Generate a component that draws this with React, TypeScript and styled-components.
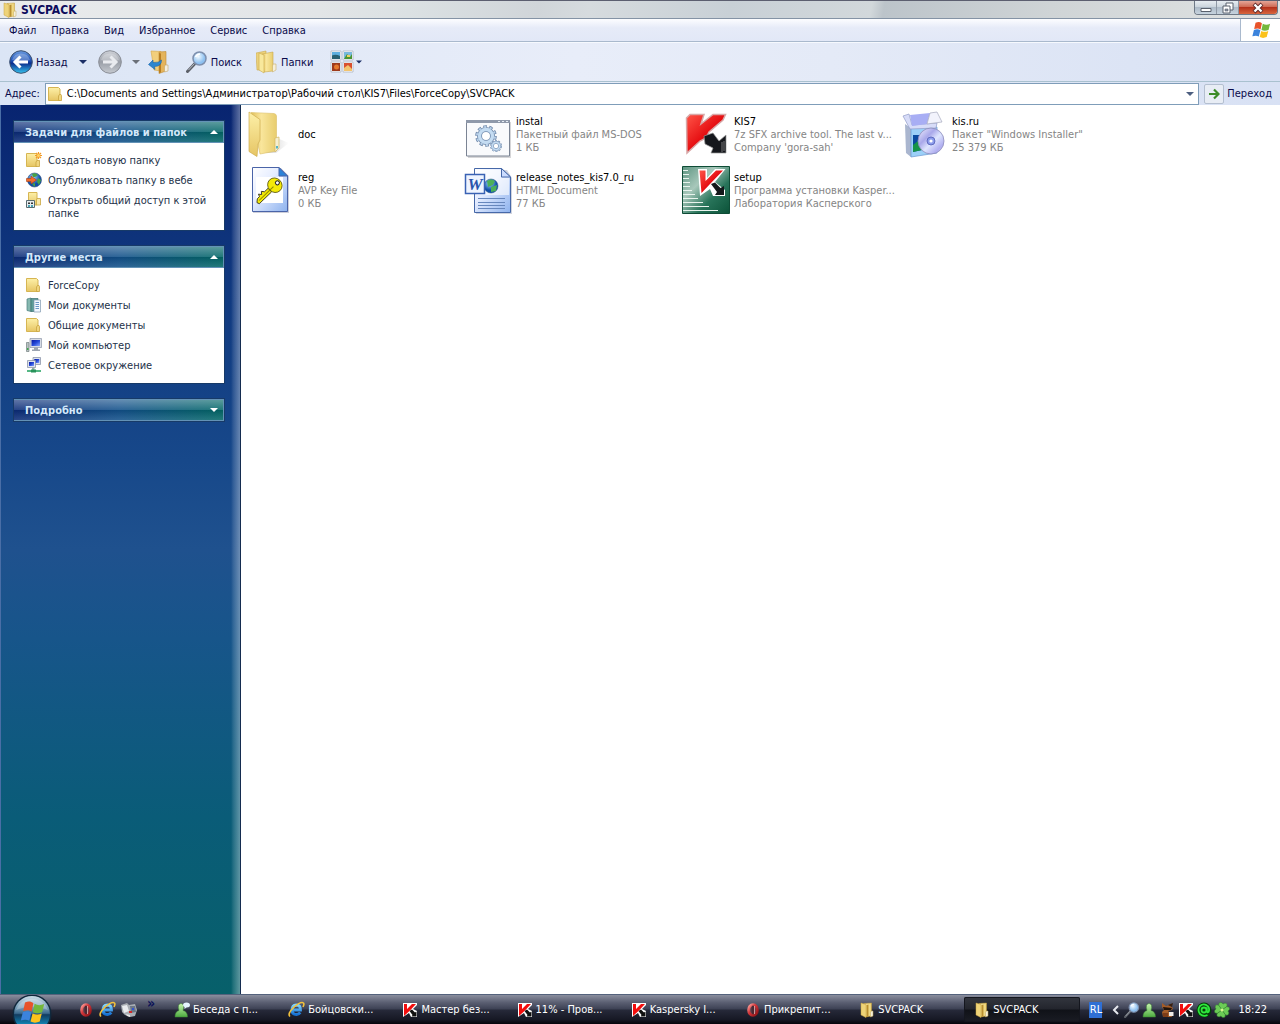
import React from "react";
import styled, { createGlobalStyle, css } from "styled-components";

const font = `Tahoma, "DejaVu Sans Condensed", "DejaVu Sans", sans-serif`;

const GlobalStyle = createGlobalStyle`
  * { box-sizing: border-box; }
  body { margin: 0; font: 11px/13px ${font}; color: #000; }
  button, input { font: inherit; color: inherit; }
  button { border: 0; background: none; padding: 0; cursor: default; white-space: nowrap; }
  ul { list-style: none; margin: 0; padding: 0; }
  h1, h2, p { margin: 0; }
  svg { display: block; flex: none; }
`;

/* ---------- shared gradients ---------- */

const stops = (...c: [number, string][]) =>
  c.map(([o, s]) => <stop key={o} offset={o} stopColor={s} />);

const DefsSvg = styled.svg`
  position: absolute;
`;

const Gradients = () => (
  <DefsSvg width="0" height="0" aria-hidden="true">
    <defs>
      <linearGradient id="yellow" x1="0" x2="1">{stops([0, "#e2c05a"], [0.4, "#f9e69c"], [1, "#e8cd6e"])}</linearGradient>
      <linearGradient id="yellowV" x2="0" y2="1">{stops([0, "#fdf0a8"], [1, "#e6c564"])}</linearGradient>
      <linearGradient id="back" x2="0" y2="1">{stops([0, "#6b9be0"], [0.45, "#1c4fb4"], [0.55, "#0b2d8c"], [1, "#35c4f0"])}</linearGradient>
      <linearGradient id="gray" x2="0" y2="1">{stops([0, "#cfd2d8"], [0.5, "#9a9fa8"], [1, "#c6cad0"])}</linearGradient>
      <linearGradient id="orb" x2="0" y2="1">{stops([0, "#c9dbe6"], [0.3, "#7fa3bc"], [0.48, "#3b6a8e"], [0.52, "#123c60"], [0.75, "#1179a8"], [1, "#37d0f0"])}</linearGradient>
      <linearGradient id="paper" x2="1" y2="1">{stops([0, "#ffffff"], [0.4, "#e4ecff"], [1, "#8db2ee"])}</linearGradient>
      <linearGradient id="red" x2="1" y2="1">{stops([0, "#ff5548"], [0.5, "#e60f12"], [1, "#b80006"])}</linearGradient>
      <linearGradient id="green" x2="1" y2="1">{stops([0, "#5c9480"], [0.35, "#a8c8bb"], [0.65, "#28745a"], [1, "#0b5238"])}</linearGradient>
      <linearGradient id="buddy" x2="0" y2="1">{stops([0, "#c8f5b0"], [1, "#4dab3f"])}</linearGradient>
      <linearGradient id="screen" x2="1" y2="1">{stops([0, "#0818a0"], [0.5, "#2448d8"], [1, "#88a8ff"])}</linearGradient>
      <linearGradient id="ie" x2="0" y2="1">{stops([0, "#7fd4ff"], [1, "#1672d4"])}</linearGradient>
      <linearGradient id="opera" x2="1" y2="1">{stops([0, "#ffa09a"], [0.4, "#d4383c"], [1, "#8c1216"])}</linearGradient>
      <linearGradient id="disc" x2="1" y2="1">{stops([0, "#f4f2ff"], [0.35, "#a9a8ea"], [0.55, "#dfe6ff"], [0.8, "#b0aef0"], [1, "#e8e4ff"])}</linearGradient>
      <radialGradient id="lens" cx="0.4" cy="0.35">{stops([0, "#f4fbff"], [1, "#8dc0f0"])}</radialGradient>
      <radialGradient id="globe" cx="0.4" cy="0.3">{stops([0, "#9cd8ff"], [1, "#0f4ea8"])}</radialGradient>
      <linearGradient id="shadow" x2="1">{stops([0, "#a8a8a8"], [1, "#ffffff"])}</linearGradient>
    </defs>
  </DefsSvg>
);

/* ---------- icons ---------- */

type IconProps = { size?: number };

const Icon = ({ size = 16, box = 16, children }: { size?: number; box?: number; children: React.ReactNode }) => (
  <svg width={size} height={size} viewBox={`0 0 ${box} ${box}`} aria-hidden="true">{children}</svg>
);

const FlagShapes = () => (
  <>
    <path d="M5 3C8 1.500 10 2 12 3.500L10.500 10.500C8.500 9 6.500 9 3.500 10Z" fill="#e8532a" />
    <path d="M13 4C15.500 5.500 18 5.500 21 4.200L19.300 11C16.500 12.200 14 12.200 11.500 11Z" fill="#74b83c" />
    <path d="M3.200 11C6 9.800 8.500 10 10.300 11.300L8.600 18.200C6.500 17 4.500 16.800 1.500 18Z" fill="#3b83dc" />
    <path d="M11.300 12C14 13.300 16.500 13.200 19 12L17.300 18.800C14.500 20 12 20 9.600 18.800Z" fill="#fbc21c" />
  </>
);

const Flag = ({ size = 20 }: IconProps) => (
  <Icon size={size} box={22}><FlagShapes /></Icon>
);

const OpenFolder = ({ size = 16 }: IconProps) => (
  <Icon size={size}>
    <path d="M5 1.500L12.500 1V14L6 15Z" fill="url(#yellow)" stroke="#c19a38" strokeWidth=".5" />
    <path d="M2 1L7 2.500V15.500L2 13Z" fill="#eed378" stroke="#c9a443" strokeWidth=".5" />
    <path d="M7.500 3L9.500 2.500V14.500L7.500 15Z" fill="#b98f2e" />
    <path d="M12.500 9H14V14L11.500 15V10Z" fill="#f4efdb" stroke="#c6ab5d" strokeWidth=".5" />
  </Icon>
);

const SmallFolder = () => (
  <Icon>
    <path d="M.5 1.500H10.500L12 3V14.500H.5Z" fill="url(#yellowV)" stroke="#d6b552" />
    <path d="M11.500 8.500H13L13.500 9.500V14.500H10.500V10Z" fill="#f0d57e" stroke="#c8a440" strokeWidth=".8" />
  </Icon>
);

const NewFolder = () => (
  <Icon>
    <path d="M.5 1.500H11V14.500H.5Z" fill="url(#yellowV)" stroke="#d6b552" />
    <path d="M11 8.500H13.500V14.500H10V10Z" fill="#f0d57e" stroke="#c8a440" strokeWidth=".8" />
    <path d="M12.500 0V7M9 3.500H16M10 1L15 6M15 1L10 6" stroke="#f39a25" strokeWidth="1.200" />
    <circle cx="12.500" cy="3.500" r="1.500" fill="#ffd464" />
  </Icon>
);

const PublishGlobe = () => (
  <Icon>
    <circle cx="8.500" cy="8" r="7" fill="url(#globe)" stroke="#39517c" strokeWidth=".6" />
    <path d="M6 2Q9 0 12 3L9 5L7 5ZM12 6L15 8L13 13L11 10ZM6 12L9 11L9 15Z" fill="#48a243" />
    <path d="M.5 6.500H5V4L10.500 8L5 12V9.500H.5Z" fill="#f06c2c" stroke="#a43c14" strokeWidth=".6" />
  </Icon>
);

const ShareFolder = () => (
  <Icon>
    <path d="M2.500 .5H11V13H2.500Z" fill="url(#yellowV)" stroke="#d6b552" />
    <path d="M11 6.500H14.500V13H10.500V8Z" fill="#fae9a8" stroke="#c8a440" strokeWidth=".8" />
    <path d="M.5 8.500H8.500V15.500H.5Z" fill="#e8edf0" stroke="#596b70" />
    <path d="M2 10.500H4V12H2ZM5 10.500H7V12H5Z" fill="#333" />
    <path d="M2 13H4V15H2ZM5 13H7V15H5Z" fill="#4aa3b5" />
  </Icon>
);

const Documents = () => (
  <Icon>
    <path d="M1 2L5 1V14.500L1 13.500Z" fill="#86b8b0" stroke="#487c7c" strokeWidth=".7" />
    <path d="M5 1.500H12V14.500H5Z" fill="#5d9c98" stroke="#3b706f" strokeWidth=".7" />
    <path d="M8 3H14.500V15H8Z" fill="#f2f8ff" stroke="#8199b0" strokeWidth=".7" />
    <path d="M9.500 5.500H13M9.500 7.500H13M9.500 9.500H13M9.500 11.500H13" stroke="#6b96c7" />
  </Icon>
);

const Computer = () => (
  <Icon>
    <path d="M.5 5.500H3V14.500H.5Z" fill="#b9c3c4" stroke="#738080" strokeWidth=".7" />
    <path d="M1 11H2.500V13H1Z" fill="#3fa64d" />
    <path d="M4 1.500H15.500V10.500H4Z" fill="#d6dbe6" stroke="#8e96a6" strokeWidth=".7" />
    <path d="M5.500 3H14V9H5.500Z" fill="url(#screen)" />
    <path d="M8 10.500H12V12.500H14V14H6V12.500H8Z" fill="#9ca4b0" />
  </Icon>
);

const Network = () => (
  <Icon>
    <path d="M7 .5H14.500V7.500H7Z" fill="#dde2ec" stroke="#808aa0" strokeWidth=".7" />
    <path d="M8.300 2H13.300V6H8.300Z" fill="url(#screen)" />
    <path d="M1.500 3.500H9.500V10.500H1.500Z" fill="#dde2ec" stroke="#808aa0" strokeWidth=".7" />
    <path d="M3 5H8V9H3Z" fill="url(#screen)" />
    <path d="M6 10.500H8.500V13H6Z" fill="#9aa" />
    <path d="M1 13H15V15H1Z" fill="#55b885" />
    <path d="M5 12.500H10V15.500H5Z" fill="#28925a" />
  </Icon>
);

const Magnifier = ({ size = 22 }: IconProps) => (
  <Icon size={size} box={22}>
    <path d="M8.500 13L1.500 20.500" stroke="#5c6068" strokeWidth="3" strokeLinecap="round" />
    <path d="M8.500 12.500L2.500 19" stroke="#b8bdc6" strokeWidth="1" />
    <circle cx="13.500" cy="7.500" r="6.500" fill="url(#lens)" stroke="#7e90ae" strokeWidth="1.500" />
    <path d="M9.500 6Q11 3 14 3" stroke="#fff" strokeWidth="1.500" fill="none" />
  </Icon>
);

const RoundArrow = ({ forward }: { forward?: boolean }) => (
  <Icon size={24} box={24}>
    <circle cx="12" cy="12" r="11.300" fill={forward ? "url(#gray)" : "url(#back)"} stroke={forward ? "#898d96" : "#3c506e"} />
    <path d="M3 10A9.500 9.500 0 0 1 21 10Q12 13 3 10Z" fill="#fff" opacity=".25" />
    <path
      d={forward ? "M5 12H17.500M12.500 6.500L18 12L12.500 17.500" : "M19 12H6.500M11.500 6.500L6 12L11.500 17.500"}
      stroke={forward ? "#e9ebef" : "#fff"} strokeWidth="3" fill="none"
    />
  </Icon>
);

const UpFolder = () => (
  <Icon size={24} box={24}>
    <path d="M3 1L13 1.500V21L6 20Z" fill="#f2cf7c" stroke="#d6a748" strokeWidth=".6" />
    <path d="M11 2L18 1.500V21L11 23.500Z" fill="#e4b45c" stroke="#bf8a30" strokeWidth=".6" />
    <path d="M11 3L13 3.500V22.500L11 23Z" fill="#b97f24" />
    <path d="M17 15H20V21L16.500 22V17Z" fill="#f4efe2" stroke="#c2a468" strokeWidth=".6" />
    <path d="M.5 14.500L5 10V12.500Q11 13 13.500 10Q13.500 16.500 6.500 16.500L7 19.500Z" fill="#2c86d0" stroke="#1663a8" strokeWidth=".6" />
  </Icon>
);

const FoldersPair = () => (
  <Icon size={24} box={24}>
    <path d="M0 3L10 1V20L1 20Z" fill="#ecd27c" stroke="#cba94c" strokeWidth=".6" />
    <path d="M6 4L17 2V21L8 22Z" fill="url(#yellow)" stroke="#cba94c" strokeWidth=".6" />
    <path d="M3 3L8 5V23L3 20Z" fill="#f8e89c" stroke="#cba94c" strokeWidth=".6" />
    <path d="M17 14H20V20L16.500 22V16Z" fill="#f5efd9" stroke="#c9b068" strokeWidth=".6" />
  </Icon>
);

const Views = () => (
  <Icon size={24} box={24}>
    <path d="M1 1H11V10H1ZM13 1H23V10H13ZM1 12H11V22H1ZM13 12H23V22H13Z" fill="#fff" stroke="#adb4bf" strokeWidth=".8" />
    <path d="M2 2H10V6H2Z" fill="#5eaede" /><path d="M2 5.500Q6 4 10 6V9H2Z" fill="#285f70" />
    <path d="M14 2H22V9H14Z" fill="#78b8dc" /><path d="M14 9L17 4L20 7L22 4V9Z" fill="#4a9530" /><path d="M17 5H20V7H17Z" fill="#ecd060" />
    <path d="M2 13H10V21H2Z" fill="#9e3b1c" /><circle cx="6.500" cy="17" r="2.500" fill="#e67a2c" />
    <path d="M14 13H22V21H14Z" fill="#d8502f" /><path d="M14 18L18 15L22 19V21H14Z" fill="#f3c46e" />
  </Icon>
);

const Caret = ({ color = "#1b2f66", up, size = 8 }: { color?: string; up?: boolean; size?: number }) => (
  <Icon size={size} box={8}><path d={up ? "M0 6L4 2L8 6Z" : "M0 2L4 6L8 2Z"} fill={color} /></Icon>
);

const GoArrow = () => (
  <Icon size={12} box={12}><path d="M1 6H10M6 1.500L10.500 6L6 10.500" stroke="#3c8c28" strokeWidth="2.200" fill="none" /></Icon>
);

const Kasper = ({ size = 16 }: IconProps) => (
  <Icon size={size}>
    <path d="M1 1H15V3L11 7L15 9V15H9L7 11L1 15Z" fill="#fff" />
    <path d="M2 2H5V7L10 2H14L8 8.500L2 14Z" fill="#f20d0d" />
    <path d="M7.500 9L10 7.500L13 10.500L14.500 9.500V14.500H9.500L10.500 13Z" fill="#101010" />
  </Icon>
);

const Explorer = () => (
  <Icon size={17} box={17}>
    <path d="M4 9H12.500Q12.500 4 8.300 4Q4 4.300 4 9Q4 13.500 8.500 13.500Q11 13.500 12.200 11.500" stroke="url(#ie)" strokeWidth="2.800" fill="none" />
    <path d="M2 15.500Q-1 13 6 6Q13 0 15.500 2Q16.500 3 15 6" stroke="#f3c23c" strokeWidth="1.600" fill="none" />
  </Icon>
);

const OperaMark = () => (
  <Icon>
    <ellipse cx="8" cy="8" rx="4.300" ry="5.300" fill="#5c4450" stroke="url(#opera)" strokeWidth="3" />
    <ellipse cx="8" cy="8" rx="1.500" ry="4.400" fill="#4a2832" />
    <path d="M9.500 4V12" stroke="#e8b4b4" strokeWidth=".8" />
  </Icon>
);

const Monitor = () => (
  <Icon>
    <path d="M0 3L6 1L8 3L14 2L16 8L14 14L9 15L4 13L1 10Z" fill="#a9aeb4" />
    <path d="M1 4L6 3L8 9L3 11Z" fill="#e9ecef" /><path d="M9 4L14 4L15 10L10 11Z" fill="#6b7686" />
    <path d="M8 9H11V11H8Z" fill="#d02828" /><path d="M11 6H13V8H11Z" fill="#3554d0" /><path d="M5 12L9 13V15L6 14Z" fill="#e4e4e4" />
  </Icon>
);

const Buddy = ({ bubble }: { bubble?: boolean }) => (
  <Icon>
    <path d="M1 15Q1 9.500 5 8.500Q3 2 7 1.500Q11 2 9 8.500Q13.500 9.500 13.500 15Z" fill="url(#buddy)" stroke="#3c8434" strokeWidth=".5" />
    {bubble && <path d="M9 3Q9 .5 12.500 .5Q16 .5 16 3Q16 5.500 12.500 5.500L10.500 7V5Q9 4.500 9 3Z" fill="#e6f4ff" />}
  </Icon>
);

const Donkey = () => (
  <Icon>
    <path d="M2 1L6 4L9 3L13 6L12 8L8 9L11 12L12 15H3L2 10L4 8L2 5Z" fill="#a45c28" />
    <path d="M3 5L12 6L11 8L4 8Z" fill="#20140c" />
    <path d="M9 10H13.500V14H9Z" fill="#f0ece8" />
    <path d="M3 11H8V15H3Z" fill="#7c3c18" />
    <path d="M8 3L13 1L12 5Z" fill="#3a2010" />
  </Icon>
);

const AtMark = () => (
  <Icon>
    <circle cx="8" cy="8" r="7.500" fill="#063f0a" />
    <circle cx="8" cy="8" r="2.500" fill="none" stroke="#2ee83c" strokeWidth="1.800" />
    <path d="M10.800 5.500V9Q11 11 12.500 10Q14 7 12 4.300Q8 .5 4 4Q1 8 4 12Q7.500 15 11.500 13" fill="none" stroke="#2ee83c" strokeWidth="1.800" />
  </Icon>
);

const Clover = () => (
  <Icon>
    {[0, 90, 180, 270].map((r) => (
      <path key={r} transform={`rotate(${r + 10} 8 8)`} d="M8 8L4 4Q3 1 5.500 .8Q7 .5 8 2Q9 .5 10.500 .8Q13 1 12 4Z" fill="#6ccc56" stroke="#2b7a28" strokeWidth=".4" />
    ))}
    <circle cx="8" cy="8" r="1.500" fill="#d8f58c" />
  </Icon>
);

/* large 48px file icons */

const BigFolder = () => (
  <Icon size={48} box={48}>
    <path d="M31 28L43 33L30 43L18 43Z" fill="url(#shadow)" opacity=".6" />
    <path d="M5 2.500L28 3.500Q30.500 4 30.500 6V41L14 44Z" fill="url(#yellow)" stroke="#dcc068" strokeWidth=".6" />
    <path d="M29 28L33 27V38L29 42V30Z" fill="#f6efd0" stroke="#d3b863" strokeWidth=".7" />
    <path d="M30 36H32V38.500H30Z" fill="#56b4c4" />
    <path d="M3 2L14 9.500V30L12 34L11 46.500L3 41.500Z" fill="url(#yellowV)" stroke="#cfae50" strokeWidth=".7" />
  </Icon>
);

const KeyFile = () => (
  <Icon size={48} box={48}>
    <path d="M7 2H35L43 10V47H7Z" fill="#9b9db4" opacity=".5" />
    <path d="M6.500 1.500H33L41.500 10V45.500H6.500Z" fill="url(#paper)" stroke="#4a64a8" />
    <path d="M33 1.500V10H41.500Z" fill="#2c83d8" stroke="#4a64a8" />
    <path d="M10 11H37V37H10Z" fill="#fff" />
    <g transform="rotate(46 26 22)">
      <path d="M23.500 25H28.500V42L26 43L23.500 40V37L21 36L23.500 34L21 32L23.500 30Z" fill="#f4ea08" stroke="#222" strokeWidth=".8" />
      <ellipse cx="26" cy="18" rx="7.500" ry="7" fill="#f4ea08" stroke="#55500c" strokeWidth=".8" />
      <circle cx="26" cy="14.500" r="2" fill="#fff" stroke="#222" />
      <path d="M26 20V40" stroke="#8c8600" />
    </g>
  </Icon>
);

const Gear = ({ x, y, s }: { x: number; y: number; s: number }) => (
  <g transform={`translate(${x} ${y}) scale(${s})`}>
    <circle r="9" fill="none" stroke="#6f88aa" strokeWidth="3.600" strokeDasharray="3.400 2.255" />
    <circle r="6.500" fill="#fff" stroke="#6f88aa" strokeWidth="5" />
    <circle r="6.500" fill="none" stroke="#c4dcf2" strokeWidth="3.400" />
    <circle r="9" fill="none" stroke="#b8d0e8" strokeWidth="2" strokeDasharray="2.200 3.455" strokeDashoffset="-.6" />
  </g>
);

const BatchFile = () => (
  <Icon size={48} box={48}>
    <path d="M4 12H47V48H4Z" fill="#c4c4c8" opacity=".7" />
    <path d="M2.500 10.500H45.500V46H2.500Z" fill="#f9fafc" stroke="#7b8494" />
    <path d="M2 10H46V13H2Z" fill="#8f99aa" />
    <path d="M34 11.500H36M38 11.500H40M42 11.500H44" stroke="#e6edf4" />
    <Gear x={22} y={26} s={1} />
    <Gear x={32} y={36} s={0.55} />
  </Icon>
);

const WordFile = () => (
  <Icon size={48} box={48}>
    <path d="M12 4H43L48 12V48H12Z" fill="#8c94ac" opacity=".4" />
    <path d="M10.500 2.500H37.500L46.500 11V46.500H10.500Z" fill="url(#paper)" stroke="#4668a8" />
    <path d="M12 4H37V12H45V29H12Z" fill="#fff" opacity=".6" />
    <path d="M37.500 2.500V11H46.500Z" fill="#cbdcff" stroke="#4668a8" />
    <path d="M14 32.500H41M14 36.500H41M14 39.500H41M14 42.500H41" stroke="#6787bd" />
    <circle cx="27" cy="20" r="7" fill="url(#globe)" stroke="#24507c" strokeWidth=".5" />
    <path d="M23 15Q27 12 31 15L29 19L24 21ZM27 21L33 19L32 25L27 26Z" fill="#4cb058" />
    <path d="M1.500 8.500H20.500V27.500H1.500Z" fill="#eef4ff" stroke="#3a62b4" strokeWidth="1.500" />
    <text x="11" y="24" textAnchor="middle" fontFamily="Liberation Serif, serif" fontStyle="italic" fontWeight="bold" fontSize="17" fill="#2a54ac">W</text>
  </Icon>
);

const KasperBig = () => (
  <Icon size={48} box={48}>
    <path d="M4.500 8L8 4.500H22L19 14L31 4.500H43.500L41 10L27 22L24 28L18 31L5 43Z" fill="url(#red)" stroke="#d8a8a8" strokeWidth="1.500" />
    <path d="M22 26L31 23L37 31L44 25V43H29L31 38L23 34Z" fill="#15171c" stroke="#999" strokeWidth=".7" />
    <path d="M40 32V42M42 31V41" stroke="#777" />
  </Icon>
);

const SetupIcon = () => (
  <Icon size={48} box={48}>
    <path d="M.5 .5H47.500V47.500H.5Z" fill="url(#green)" stroke="#0e4c36" />
    <path
      d="M1 4.500H6M1 8.500H7M1 12.500H7M1 16.500H8M1 20.500H8M1 24.500H10M1 28.500H13M1 32.500H16M1 36.500H21M1 40.500H27M1 44.500H36"
      stroke="#e9f4ee" strokeWidth="1.200"
    />
    <path d="M16 3H25V12L33 3H43.500L33 16L43 24V30H31L28 23L18 30Z" fill="#fff" />
    <path d="M17.500 4.500H23.500V15L34 4.500H41L28 18L19.500 27Z" fill="url(#red)" />
    <path d="M29 18L33 16.500L38.500 22L42 20V29H33L35 26Z" fill="#14181a" />
  </Icon>
);

const InstallerBox = () => (
  <Icon size={48} box={48}>
    <path d="M5 14L11 18V47L6 43Z" fill="#aab6cf" />
    <path d="M11 17H37V43L11 47Z" fill="#9cd0f8" stroke="#6c98d0" strokeWidth=".7" />
    <path d="M3 6L9 4L12 15L37 13L36 18L10 19Z" fill="#d7dcf8" stroke="#929cc8" strokeWidth=".7" />
    <path d="M10 5L30 3L27 14L12 16Z" fill="#a8aef4" />
    <path d="M30 3L37 2L42 12L27 14Z" fill="#f2f3fc" stroke="#a6a9bd" strokeWidth=".7" />
    <path d="M13 25H22V40L13 42Z" fill="#0b4aa0" /><path d="M13 35L18 31L22 36V40L13 42Z" fill="#169448" />
    <circle cx="31" cy="31" r="13" fill="url(#disc)" stroke="#8c8cba" strokeWidth=".8" />
    <circle cx="31" cy="31" r="4" fill="#8c9cec" stroke="#505cb4" strokeWidth=".8" />
    <circle cx="31" cy="31" r="1.600" fill="#fff" />
  </Icon>
);

/* ---------- window chrome ---------- */

const Page = styled.div`
  min-height: 100vh;
  display: flex;
  flex-direction: column;
  background: #fff;
`;

const TitleBar = styled.header`
  display: flex;
  align-items: center;
  gap: 3px;
  height: 19px;
  padding-left: 2px;
  border-top: 1px solid #5c5f70;
  border-bottom: 1px solid #8493a5;
  background: linear-gradient(100deg, #e9ebec 0%, #e2e5e7 25%, #dbe1e3 32%, #d0d5d9 42%, #d6dbde 46%, #c8d0d6 57%, #d2d8db 68%, #bcc4ca 69%, #cfd4d6 82%, #e0e3e3 100%);
`;

const Title = styled.h1`
  flex: 1;
  font-size: 12px;
  line-height: 16px;
  color: #0c0c5c;
`;

const Controls = styled.div`
  display: flex;
  align-self: flex-start;
  height: 14px;
  margin-right: 2px;
  border: 1px solid #6e7986;
  border-top: 0;
  border-radius: 0 0 4px 4px;
  overflow: hidden;
`;

const Control = styled.button<{ $close?: boolean }>`
  display: flex;
  justify-content: center;
  align-items: center;
  width: ${(p) => (p.$close ? 38 : 22)}px;
  border-right: ${(p) => (p.$close ? 0 : 1)}px solid #8e98a5;
  background: ${(p) =>
    p.$close
      ? "linear-gradient(#e5a698, #cf6a54 45%, #b5321c 50%, #d8663e)"
      : "linear-gradient(#e6ecf1, #ccd5dd 45%, #aebbc8 50%, #c6d3de)"};
`;

const MenuRow = styled.div`
  display: flex;
  height: 23px;
  border-bottom: 1px solid #a9b9cd;
  background: linear-gradient(#fcfdff, #e6ebf8 40%, #e2e8f7);
`;

const Menu = styled.nav`
  display: flex;
  flex: 1;
  padding-left: 2px;
  color: #0a0a4a;
`;

const MenuItem = styled.button`
  padding: 0 8px 0 7px;
`;

const FlagBox = styled.div`
  display: flex;
  align-items: center;
  justify-content: center;
  width: 40px;
  border-left: 1px solid #a9b9cd;
  background: #fff;
`;

const Toolbar = styled.div`
  display: flex;
  align-items: center;
  height: 40px;
  padding: 0 9px;
  color: #0a0a4a;
  border-top: 1px solid #f6f9fe;
  border-bottom: 1px solid #a9c1cf;
  background: linear-gradient(90deg, #dbe5f5, #e8edf9 45%, #e4eaf7 65%, #d8e1f4);
`;

const ToolButton = styled.button<{ $gap?: number; $after?: number }>`
  display: flex;
  align-items: center;
  gap: ${(p) => p.$gap ?? 3}px;
  margin-right: ${(p) => p.$after ?? 0}px;
`;

const AddressRow = styled.div`
  display: flex;
  align-items: center;
  gap: 5px;
  height: 23px;
  padding: 0 8px 0 5px;
  color: #0a0a4a;
  background: linear-gradient(90deg, #dbe5f5, #e8edf9 45%, #e4eaf7 65%, #d8e1f4);
`;

const AddressBox = styled.div`
  display: flex;
  flex: 1;
  align-items: center;
  gap: 3px;
  height: 22px;
  padding: 0 4px 0 2px;
  border: 1px solid #7f9db9;
  background: #fff;
`;

const AddressInput = styled.input`
  flex: 1;
  min-width: 0;
  padding: 0;
  border: 0;
  outline: 0;
  color: #000;
  background: transparent;
`;

const GoIcon = styled.span`
  display: flex;
  align-items: center;
  justify-content: center;
  width: 20px;
  height: 20px;
  border: 1px solid #b4bfd0;
  border-radius: 2px;
  background: #e8edf5;
`;

/* ---------- side bar ---------- */

const Main = styled.main`
  display: flex;
  flex: 1;
`;

const Sidebar = styled.aside`
  display: flex;
  flex-direction: column;
  gap: 16px;
  width: 241px;
  padding: 16px 16px 16px 13px;
  border-left: 1px solid #4a6ea6;
  border-right: 1px solid #142c50;
  background:
    linear-gradient(90deg, transparent 230px, rgba(255, 255, 255, 0.1) 232px, rgba(255, 255, 255, 0.35) 239px),
    linear-gradient(#082470, #113a80 22%, #17488a 40%, #1f518e 50%, #17558a 60%, #0a5c78 80%, #07606a);
`;

const Panel = styled.section`
  background: #fff;
  box-shadow: 0 0 0 1px #173a68;
`;

const PanelHead = styled.h2`
  font-size: 11px;
`;

const PanelButton = styled.button`
  display: flex;
  align-items: center;
  justify-content: space-between;
  width: 100%;
  height: 22px;
  padding: 0 5px 0 11px;
  border: 1px solid #6392b6;
  border-width: 1px 1px 1px 0;
  font-weight: bold;
  color: #d3e8fa;
  background:
    linear-gradient(rgba(255, 255, 255, 0.34), rgba(255, 255, 255, 0.12) 48%, rgba(0, 0, 0, 0.08) 52%, rgba(255, 255, 255, 0.12)),
    linear-gradient(90deg, #0c2c78, #12508a 50%, #046868);
`;

const PanelList = styled.ul`
  display: flex;
  flex-direction: column;
  gap: 4px;
  padding: 9px 12px 10px;
`;

const PanelLink = styled.a`
  display: flex;
  align-items: flex-start;
  gap: 6px;
  min-height: 16px;
  color: #24324a;
  text-decoration: none;

  span { padding-top: 2px; }
`;

/* ---------- file view ---------- */

const Files = styled.ul`
  display: grid;
  flex: 1;
  align-content: start;
  grid-template-columns: repeat(auto-fill, 218px);
  grid-auto-rows: 56px;
  padding: 1px 0 0 5px;
`;

const Tile = styled.li`
  display: flex;
  align-items: center;
  gap: 4px;
  white-space: nowrap;
`;

const TileNote = styled.p`
  color: #858585;
`;

/* ---------- task bar ---------- */

const Taskbar = styled.footer`
  display: flex;
  align-items: stretch;
  height: 30px;
  color: #fff;
  border-top: 1px solid #54627c;
  background: linear-gradient(#8a8e9e, #5c6073 25%, #3d4154 48%, #262939 52%, #161824 85%, #04040a);
`;

const Start = styled.button`
  display: flex;
  align-items: flex-start;
  width: 40px;
  margin: 0 26px 0 12px;
  overflow: hidden;
`;

const Quick = styled.div`
  display: flex;
  align-items: center;
  gap: 5px;
  width: 87px;
`;

const More = styled.button`
  align-self: flex-start;
  margin: 2px 0 0 5px;
  font-size: 14px;
  font-weight: bold;
  color: #0c1258;
`;

const Tasks = styled.nav`
  display: flex;
  flex: 1;
  min-width: 0;
`;

const Task = styled.button<{ $active?: boolean }>`
  display: flex;
  flex: 1;
  align-items: center;
  gap: 3px;
  min-width: 0;
  padding-left: 9px;
  ${(p) =>
    p.$active &&
    css`
      margin: 2px 0;
      padding-left: 10px;
      border-radius: 2px;
      box-shadow: inset 0 0 0 1px #14161e;
      background: linear-gradient(#33363f, #23252d 48%, #101218 52%, #1a1c24);
    `}
`;

const Tray = styled.div`
  display: flex;
  align-items: center;
  gap: 2px;
  padding: 0 13px 0 10px;
`;

const Lang = styled.button`
  height: 16px;
  width: 13px;
  margin-right: 6px;
  background: #2f6fd4;
`;

const Clock = styled.time`
  margin-left: 6px;
`;

/* ---------- content ---------- */

const menuItems = ["Файл", "Правка", "Вид", "Избранное", "Сервис", "Справка"];

const panels = [
  {
    title: "Задачи для файлов и папок",
    items: [
      { icon: <NewFolder />, text: "Создать новую папку" },
      { icon: <PublishGlobe />, text: "Опубликовать папку в вебе" },
      { icon: <ShareFolder />, text: "Открыть общий доступ к этой папке" },
    ],
  },
  {
    title: "Другие места",
    items: [
      { icon: <SmallFolder />, text: "ForceCopy" },
      { icon: <Documents />, text: "Мои документы" },
      { icon: <SmallFolder />, text: "Общие документы" },
      { icon: <Computer />, text: "Мой компьютер" },
      { icon: <Network />, text: "Сетевое окружение" },
    ],
  },
  { title: "Подробно", items: [] },
];

const files = [
  { icon: <BigFolder />, name: "doc", notes: [] },
  { icon: <BatchFile />, name: "instal", notes: ["Пакетный файл MS-DOS", "1 КБ"] },
  { icon: <KasperBig />, name: "KIS7", notes: ["7z SFX archive tool. The last v...", "Company 'gora-sah'"] },
  { icon: <InstallerBox />, name: "kis.ru", notes: ["Пакет \"Windows Installer\"", "25 379 КБ"] },
  { icon: <KeyFile />, name: "reg", notes: ["AVP Key File", "0 КБ"] },
  { icon: <WordFile />, name: "release_notes_kis7.0_ru", notes: ["HTML Document", "77 КБ"] },
  { icon: <SetupIcon />, name: "setup", notes: ["Программа установки Kasper...", "Лаборатория Касперского"] },
];

const tasks = [
  { icon: <Buddy bubble />, text: "Беседа с п..." },
  { icon: <Explorer />, text: "Бойцовски..." },
  { icon: <Kasper />, text: "Мастер без..." },
  { icon: <Kasper />, text: "11% - Пров..." },
  { icon: <Kasper />, text: "Kaspersky I..." },
  { icon: <OperaMark />, text: "Прикрепит..." },
  { icon: <OpenFolder />, text: "SVCPACK" },
  { icon: <OpenFolder />, text: "SVCPACK", active: true },
];

export default function App() {
  return (
    <Page>
      <GlobalStyle />
      <Gradients />
      <TitleBar>
        <OpenFolder />
        <Title>SVCPACK</Title>
        <Controls>
          <Control aria-label="Свернуть">
            <Icon size={12} box={12}><path d="M1 6.500H11V9.500H1Z" fill="#fff" stroke="#59606c" /></Icon>
          </Control>
          <Control aria-label="Восстановить">
            <Icon size={12} box={12}>
              <path d="M4 1H11V8H4Z" fill="#fff" stroke="#59606c" />
              <path d="M1 4H8V11H1Z" fill="#fff" stroke="#59606c" />
              <path d="M3 7H6V9H3Z" fill="#8e98a5" stroke="#59606c" strokeWidth=".6" />
            </Icon>
          </Control>
          <Control $close aria-label="Закрыть">
            <Icon size={12} box={12}>
              <path d="M2 2L10 10M10 2L2 10" stroke="#5e2a2a" strokeWidth="4" />
              <path d="M2.500 2.500L9.500 9.500M9.500 2.500L2.500 9.500" stroke="#fff" strokeWidth="2.400" />
            </Icon>
          </Control>
        </Controls>
      </TitleBar>
      <MenuRow>
        <Menu>
          {menuItems.map((m) => <MenuItem key={m}>{m}</MenuItem>)}
        </Menu>
        <FlagBox><Flag /></FlagBox>
      </MenuRow>
      <Toolbar>
        <ToolButton $after={11}><RoundArrow />Назад</ToolButton>
        <ToolButton $after={11} aria-label="Список назад"><Caret /></ToolButton>
        <ToolButton $after={10} aria-label="Вперед"><RoundArrow forward /></ToolButton>
        <ToolButton $after={8} aria-label="Список вперед"><Caret color="#6b7078" /></ToolButton>
        <ToolButton $after={14} aria-label="Вверх"><UpFolder /></ToolButton>
        <ToolButton $after={14}><Magnifier />Поиск</ToolButton>
        <ToolButton $gap={1} $after={17}><FoldersPair />Папки</ToolButton>
        <ToolButton $gap={2} aria-label="Вид"><Views /><Caret size={6} /></ToolButton>
      </Toolbar>
      <AddressRow>
        <label htmlFor="address">Адрес:</label>
        <AddressBox>
          <SmallFolder />
          <AddressInput
            id="address"
            defaultValue="C:\Documents and Settings\Администратор\Рабочий стол\KIS7\Files\ForceCopy\SVCPACK"
          />
          <ToolButton aria-label="Показать список"><Caret color="#4d5f80" /></ToolButton>
        </AddressBox>
        <ToolButton><GoIcon><GoArrow /></GoIcon>Переход</ToolButton>
      </AddressRow>
      <Main>
        <Sidebar>
          {panels.map((p) => (
            <Panel key={p.title}>
              <PanelHead>
                <PanelButton aria-expanded={p.items.length > 0}>
                  {p.title}
                  <Caret color="#fff" up={p.items.length > 0} />
                </PanelButton>
              </PanelHead>
              {p.items.length > 0 && (
                <PanelList>
                  {p.items.map((i) => (
                    <li key={i.text}>
                      <PanelLink href="#">{i.icon}<span>{i.text}</span></PanelLink>
                    </li>
                  ))}
                </PanelList>
              )}
            </Panel>
          ))}
        </Sidebar>
        <Files>
          {files.map((f) => (
            <Tile key={f.name}>
              {f.icon}
              <div>
                <p>{f.name}</p>
                {f.notes.map((n) => <TileNote key={n}>{n}</TileNote>)}
              </div>
            </Tile>
          ))}
        </Files>
      </Main>
      <Taskbar>
        <Start aria-label="Пуск">
          <svg width="40" height="40" viewBox="0 0 40 40" aria-hidden="true">
            <circle cx="20" cy="19" r="19.500" fill="#10283c" />
            <circle cx="20" cy="19" r="18" fill="url(#orb)" />
            <path d="M4 15A17 17 0 0 1 36 15Q20 8 4 15Z" fill="#fff" opacity=".25" />
            <g transform="translate(7 4) scale(1.200)"><FlagShapes /></g>
          </svg>
        </Start>
        <Quick>
          <OperaMark />
          <Explorer />
          <Monitor />
          <More aria-label="Еще">»</More>
        </Quick>
        <Tasks>
          {tasks.map((t, i) => (
            <Task key={i} $active={t.active}>{t.icon}{t.text}</Task>
          ))}
        </Tasks>
        <Tray>
          <Lang>RL</Lang>
          <Icon size={12} box={12}><path d="M8 2L4 6L8 10" stroke="#e6e8ee" strokeWidth="2" fill="none" /></Icon>
          <Magnifier size={16} />
          <Buddy />
          <Donkey />
          <Kasper />
          <AtMark />
          <Clover />
          <Clock>18:22</Clock>
        </Tray>
      </Taskbar>
    </Page>
  );
}
